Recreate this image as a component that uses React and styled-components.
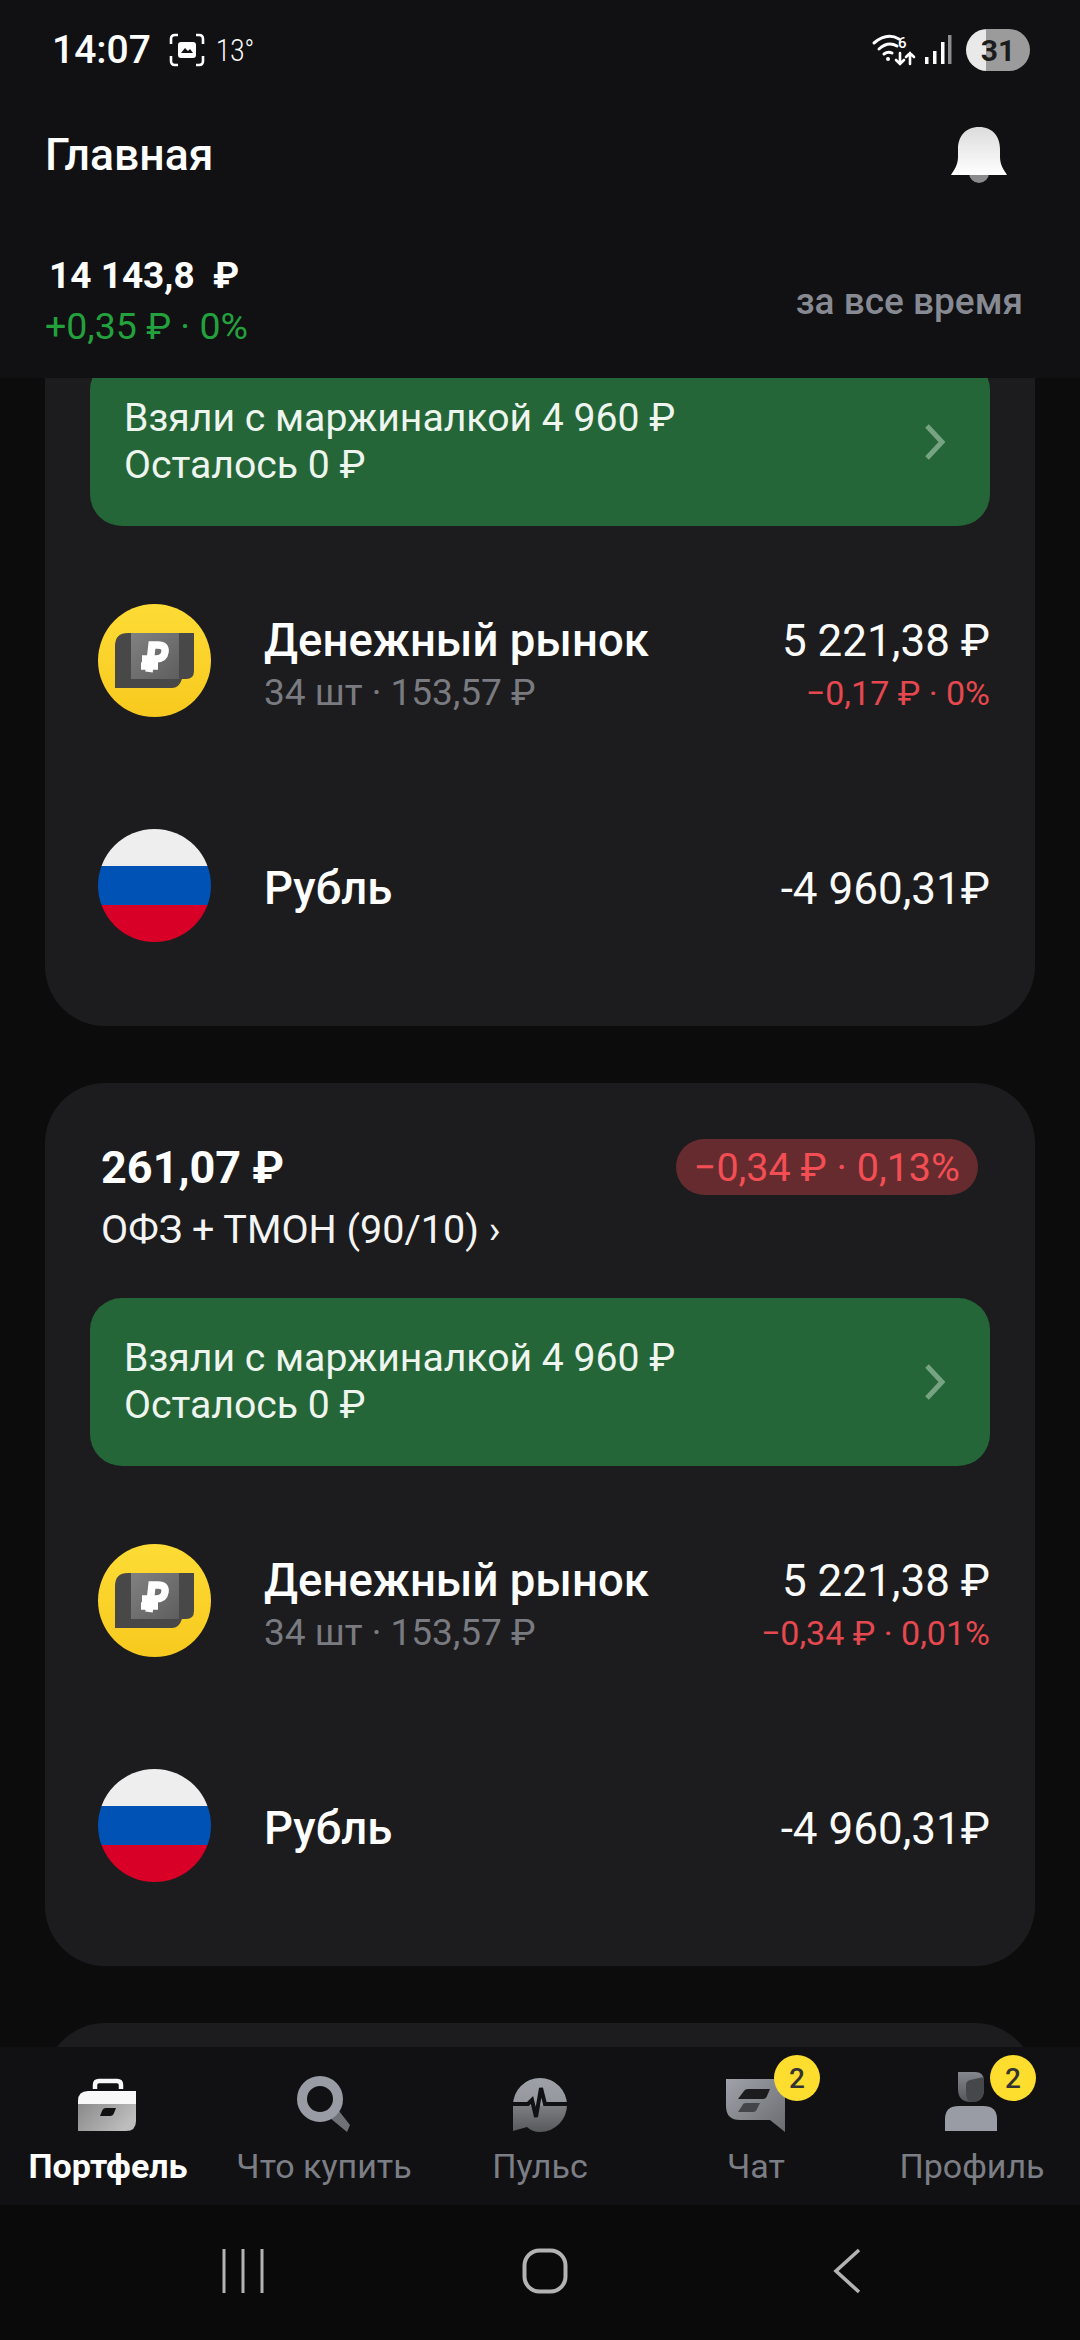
import React from "react";
import styled, { createGlobalStyle } from "styled-components";

const GlobalStyle = createGlobalStyle`
  html, body { margin: 0; padding: 0; background: #0c0c0d; }
  * { box-sizing: border-box; }
`;

const Page = styled.div`
  width: 1080px;
  height: 2340px;
  display: flex;
  flex-direction: column;
  overflow: hidden;
  background: #0c0c0d;
  color: #fff;
  font-family: Roboto, "Noto Sans", sans-serif;
`;

const Head = styled.header`
  height: 378px;
  flex: none;
  background: #111113;
`;

const StatusBar = styled.div`
  height: 100px;
  display: flex;
  align-items: center;
  padding: 0 50px 0 52px;
`;

const Clock = styled.span`
  font-size: 39px;
  font-weight: 500;
  margin-right: 18px;
`;

const Temp = styled.span`
  font-size: 32px;
  font-weight: 300;
  margin-left: 11px;
  transform: scaleX(0.8);
  transform-origin: left center;
`;

const StatusRight = styled.div`
  margin-left: auto;
  display: flex;
  align-items: center;
`;

const Battery = styled.div`
  width: 64px;
  height: 42px;
  border-radius: 21px;
  background: linear-gradient(90deg, #e9e9e9 0 20px, #9b9b9b 20px 100%);
  color: #1c1c1c;
  font-size: 30px;
  font-weight: 700;
  display: flex;
  align-items: center;
  justify-content: center;
`;

const TitleBar = styled.div`
  height: 110px;
  display: flex;
  align-items: center;
  justify-content: space-between;
  padding: 0 73px 0 45px;
`;

const Title = styled.h1`
  margin: 0;
  font-size: 44.5px;
  font-weight: 500;
`;

const Totals = styled.div`
  display: flex;
  align-items: center;
  justify-content: space-between;
  padding: 41px 57px 0 45px;
`;

const TotalValue = styled.div`
  font-size: 37px;
  font-weight: 700;
  line-height: 50px;
  padding-left: 4px;
  white-space: pre;
`;

const TotalDelta = styled.div`
  font-size: 37.5px;
  line-height: 50px;
  color: #23a13d;
`;

const Period = styled.div`
  font-size: 37px;
  font-weight: 500;
  color: #878a93;
`;

const List = styled.main`
  flex: 1;
  min-height: 0;
  overflow: hidden;
  padding: 0 45px;
  display: flex;
  flex-direction: column;
  gap: 57px;
`;

const Card = styled.section`
  flex: none;
  background: #1c1c1e;
  padding: 0 45px 28px;
  padding-top: ${(p) => (p.$cut ? "0" : "56px")};
  border-radius: ${(p) => (p.$cut ? "0 0 60px 60px" : "60px")};
`;

const NextCard = styled(Card)`
  height: 120px;
  padding: 0;
`;

const CardHead = styled.div`
  padding: 0 12px 0 11px;
  margin-bottom: 46px;
`;

const CardTop = styled.div`
  display: flex;
  align-items: center;
  justify-content: space-between;
  height: 56px;
`;

const CardSum = styled.div`
  font-size: 45px;
  font-weight: 700;
`;

const Pill = styled.div`
  height: 56px;
  padding: 0 18px;
  border-radius: 28px;
  background: #662b2e;
  color: #f44e55;
  font-size: 39.5px;
  display: flex;
  align-items: center;
`;

const CardName = styled.div`
  margin-top: 13px;
  font-size: 39.5px;
  line-height: 44px;
  color: #f4f4f4;
`;

const Banner = styled.div`
  height: 168px;
  margin-top: ${(p) => (p.$cut ? "-20px" : "0")};
  margin-bottom: 22px;
  padding: 0 44px 0 34px;
  border-radius: 32px;
  background: #256638;
  display: flex;
  align-items: center;
  justify-content: space-between;
`;

const BannerText = styled.div`
  font-size: 39.2px;
  line-height: 47px;
  color: #eef5ef;
`;

const Row = styled.div`
  height: 225px;
  display: flex;
  align-items: center;
  padding-left: 8px;
`;

const RowIcon = styled.svg`
  width: 113px;
  height: 113px;
  flex: none;
  margin-right: 53px;
`;

const RowBody = styled.div`
  flex: 1;
  min-width: 0;
  padding-top: ${(p) => (p.$single ? "6px" : "12px")};
`;

const RowEnd = styled.div`
  text-align: right;
  padding-top: ${(p) => (p.$single ? "6px" : "12px")};
`;

const RowName = styled.div`
  font-size: 45.5px;
  font-weight: 500;
  line-height: 52px;
`;

const RowSub = styled.div`
  font-size: 37px;
  line-height: 52px;
  color: #7a7b81;
`;

const RowSum = styled.div`
  font-size: 44px;
  line-height: 52px;
  color: #fafafa;
`;

const RowDelta = styled.div`
  font-size: 34px;
  line-height: 52px;
  color: #e5484f;
`;

const TabBar = styled.nav`
  height: 158px;
  flex: none;
  background: #111113;
  display: grid;
  grid-template-columns: repeat(5, 216px);
`;

const Tab = styled.div`
  position: relative;
  display: flex;
  flex-direction: column;
  align-items: center;
`;

const TabIcon = styled.div`
  height: 86px;
  display: flex;
  align-items: flex-end;
  justify-content: center;
`;

const TabLabel = styled.div`
  margin-top: 13px;
  font-size: 34px;
  line-height: 40px;
  font-weight: ${(p) => (p.$active ? 700 : 400)};
  color: ${(p) => (p.$active ? "#fff" : "#7c7e85")};
`;

const Badge = styled.div`
  position: absolute;
  top: 8px;
  left: ${(p) => p.$left}px;
  width: 46px;
  height: 46px;
  border-radius: 50%;
  background: #fddd2d;
  color: #333;
  font-size: 28px;
  font-weight: 500;
  display: flex;
  align-items: center;
  justify-content: center;
`;

const SystemBar = styled.div`
  height: 135px;
  flex: none;
  background: #0a0a0a;
  display: grid;
  grid-template-columns: repeat(3, 302px);
  justify-content: center;
  justify-items: center;
  align-items: center;
  padding: 0 0 4px 10px;
`;

const MoneyIcon = () => (
  <RowIcon viewBox="0 0 113 113">
    <defs>
      <linearGradient id="coin" x1="0" y1="0" x2="0" y2="1">
        <stop offset="0" stopColor="#fddc35" />
        <stop offset="1" stopColor="#f8c91e" />
      </linearGradient>
      <linearGradient id="note" x1="0" y1="0" x2="1" y2="1">
        <stop offset="0" stopColor="#818181" />
        <stop offset="1" stopColor="#5e5e5e" />
      </linearGradient>
    </defs>
    <circle cx="56.5" cy="56.5" r="56.5" fill="url(#coin)" />
    <path d="M30 29H96V67Q96 75 88 75H84Q81 84 74 84H17V42Q17 29 30 29Z" fill="#484848" />
    <path d="M33 29H81V75H33Z" fill="url(#note)" />
    <path d="M51 68L54 41H60Q68 41 67 48Q66 55 58 55H44M43 62H60" fill="none" stroke="#fff" strokeWidth="7.5" />
  </RowIcon>
);

const FlagIcon = () => (
  <RowIcon viewBox="0 0 113 113">
    <defs>
      <clipPath id="flagClip">
        <circle cx="56.5" cy="56.5" r="56.5" />
      </clipPath>
    </defs>
    <g clipPath="url(#flagClip)">
      <rect width="113" height="37" fill="#eeeeee" />
      <rect y="37" width="113" height="39" fill="#0052b4" />
      <rect y="76" width="113" height="37" fill="#d80027" />
    </g>
  </RowIcon>
);

const Chevron = () => (
  <svg width="22" height="38" viewBox="0 0 22 38">
    <path d="M3 3L18 19L3 35" fill="none" stroke="#76a382" strokeWidth="5" />
  </svg>
);

const BellIcon = () => (
  <svg width="56" height="56" viewBox="0 0 56 56">
    <defs>
      <linearGradient id="bell" x1="0" y1="0" x2="0" y2="1">
        <stop offset="0" stopColor="#dcdcdc" />
        <stop offset="1" stopColor="#ffffff" />
      </linearGradient>
    </defs>
    <circle cx="28" cy="46" r="10" fill="#8b8b8b" />
    <path d="M28 0C14 0 7 10 7 22V30C7 38 3 43 0 48H56C53 43 49 38 49 30V22C49 10 42 0 28 0Z" fill="url(#bell)" />
  </svg>
);

const ShotIcon = () => (
  <svg width="36" height="34" viewBox="0 0 36 34">
    <path d="M2 11V6Q2 2 6 2H9M27 2H30Q34 2 34 6V11M34 23V28Q34 32 30 32H27M9 32H6Q2 32 2 28V23" fill="none" stroke="#fff" strokeWidth="2.6" />
    <rect x="9" y="9" width="18" height="16" rx="3" fill="#fff" />
    <path d="M12 20L16 15L19 18L21 16L24 20Z" fill="#111113" />
  </svg>
);

const NetIcon = () => (
  <svg width="96" height="42" viewBox="20 10 96 42">
    <g fill="none" stroke="#fff" strokeWidth="3" strokeLinecap="round">
      <path d="M24 24Q37 13 49 20" />
      <path d="M29 30Q38 22 47 27" />
      <path d="M34 35Q38 32 42 34" />
      <path d="M50 34V45M46 41L50 45L54 41" strokeWidth="2.6" />
      <path d="M60 45V34M56 38L60 34L64 38" strokeWidth="2.6" />
    </g>
    <circle cx="38" cy="40" r="2" fill="#fff" />
    <text x="48" y="29" fontFamily="Roboto" fontWeight="500" fontSize="15" fill="#fff">6</text>
    <rect x="75" y="38" width="3.5" height="7" fill="#fff" />
    <rect x="83" y="32" width="3.5" height="13" fill="#fff" />
    <rect x="91" y="23" width="3.5" height="22" fill="#fff" />
    <rect x="98" y="16" width="3.5" height="29" fill="#8c8c8c" />
  </svg>
);

const CaseIcon = () => (
  <svg width="60" height="56" viewBox="0 0 60 56">
    <defs>
      <linearGradient id="caseFill" x1="0" y1="0" x2="1" y2="0.4">
        <stop offset="0" stopColor="#8a8a8a" />
        <stop offset="1" stopColor="#bdbdbd" />
      </linearGradient>
    </defs>
    <path d="M0 27V54H48Q58 54 58 44V27Z" fill="url(#caseFill)" />
    <path d="M0 27V24Q0 14 10 14H58V27Z" fill="#f8f8f8" />
    <path d="M17 12V8Q17 4 21 4H39Q43 4 43 8V12" fill="none" stroke="#f8f8f8" strokeWidth="4.5" />
    <path d="M24 34Q25 31 28 31H38L36 36Q35 39 32 39H22Z" fill="#111113" />
  </svg>
);

const SearchIcon = () => (
  <svg width="56" height="58" viewBox="0 0 56 58">
    <path d="M34 43L43 36L54 50L51 57Z" fill="#6f7177" />
    <circle cx="24" cy="24" r="18" fill="none" stroke="#9a9ca5" strokeWidth="10" />
  </svg>
);

const PulseIcon = () => (
  <svg width="56" height="56" viewBox="0 0 56 56">
    <defs>
      <linearGradient id="pulseFill" x1="0" y1="0" x2="0" y2="1">
        <stop offset="0" stopColor="#9fa1a9" />
        <stop offset="0.5" stopColor="#94969d" />
        <stop offset="0.52" stopColor="#7c7d81" />
        <stop offset="1" stopColor="#58595c" />
      </linearGradient>
    </defs>
    <path d="M1 28A27 27 0 1 1 28 55Q20 55 15 50L1 54Z" fill="url(#pulseFill)" />
    <path d="M1 27H16L20 23L24 40L29 11L33 27H55" fill="none" stroke="#111113" strokeWidth="4" />
  </svg>
);

const ChatIcon = () => (
  <svg width="60" height="54" viewBox="0 0 60 54">
    <defs>
      <linearGradient id="chatFill" x1="0" y1="0" x2="1" y2="1">
        <stop offset="0" stopColor="#a0a2aa" />
        <stop offset="1" stopColor="#696b70" />
      </linearGradient>
    </defs>
    <path d="M0 0H59V53L44 41H14Q0 41 0 27Z" fill="url(#chatFill)" />
    <path d="M18 12Q19 10 22 10H44L41 17Q40 20 37 20H12Z" fill="#1c1c1f" />
    <path d="M16 27Q17 24 20 24H34L31 30Q30 33 27 33H12Z" fill="#43454a" />
  </svg>
);

const ProfileIcon = () => (
  <svg width="54" height="62" viewBox="0 0 54 62">
    <defs>
      <linearGradient id="hair" x1="0" y1="0" x2="0" y2="1">
        <stop offset="0" stopColor="#85878e" />
        <stop offset="1" stopColor="#55565b" />
      </linearGradient>
    </defs>
    <path d="M13 1H30Q39 1 39 10V18Q39 31 26 31Q13 31 13 18Z" fill="url(#hair)" />
    <path d="M21 14Q21 10 25 9L39 6V18Q39 31 28 31Q21 31 21 22Z" fill="#46474b" />
    <path d="M0 60V48Q0 35 14 35H38Q52 35 52 48V60Z" fill="#9a9ca5" />
  </svg>
);

const MenuGlyph = () => (
  <svg width="42" height="44" viewBox="0 0 42 44">
    <path d="M2 0V44M21 0V44M40 0V44" stroke="#b3b3b3" strokeWidth="3" />
  </svg>
);

const HomeGlyph = () => (
  <svg width="46" height="46" viewBox="0 0 46 46">
    <rect x="2.5" y="2.5" width="41" height="41" rx="15" fill="none" stroke="#b3b3b3" strokeWidth="4" />
  </svg>
);

const BackGlyph = () => (
  <svg width="30" height="46" viewBox="0 0 30 46">
    <path d="M27 2L4 23L27 44" fill="none" stroke="#b3b3b3" strokeWidth="3.6" />
  </svg>
);

const tabs = [
  { label: "Портфель", icon: CaseIcon, active: true },
  { label: "Что купить", icon: SearchIcon },
  { label: "Пульс", icon: PulseIcon },
  { label: "Чат", icon: ChatIcon, badge: 126 },
  { label: "Профиль", icon: ProfileIcon, badge: 126 },
];

const Holdings = ({ cut, delta }) => (
  <>
    <Banner $cut={cut}>
      <BannerText>
        Взяли с маржиналкой 4 960 ₽
        <br />
        Осталось 0 ₽
      </BannerText>
      <Chevron />
    </Banner>
    <Row>
      <MoneyIcon />
      <RowBody>
        <RowName>Денежный рынок</RowName>
        <RowSub>34 шт · 153,57 ₽</RowSub>
      </RowBody>
      <RowEnd>
        <RowSum>5 221,38 ₽</RowSum>
        <RowDelta>{delta}</RowDelta>
      </RowEnd>
    </Row>
    <Row>
      <FlagIcon />
      <RowBody $single>
        <RowName>Рубль</RowName>
      </RowBody>
      <RowEnd $single>
        <RowSum>-4 960,31₽</RowSum>
      </RowEnd>
    </Row>
  </>
);

export default function App() {
  return (
    <Page>
      <GlobalStyle />
      <Head>
        <StatusBar>
          <Clock>14:07</Clock>
          <ShotIcon />
          <Temp>13°</Temp>
          <StatusRight>
            <NetIcon />
            <Battery>31</Battery>
          </StatusRight>
        </StatusBar>
        <TitleBar>
          <Title>Главная</Title>
          <BellIcon />
        </TitleBar>
        <Totals>
          <div>
            <TotalValue>14 143,8  ₽</TotalValue>
            <TotalDelta>+0,35 ₽ · 0%</TotalDelta>
          </div>
          <Period>за все время</Period>
        </Totals>
      </Head>

      <List>
        <Card $cut>
          <Holdings cut delta="−0,17 ₽ · 0%" />
        </Card>
        <Card>
          <CardHead>
            <CardTop>
              <CardSum>261,07 ₽</CardSum>
              <Pill>−0,34 ₽ · 0,13%</Pill>
            </CardTop>
            <CardName>ОФЗ + ТМОН (90/10) ›</CardName>
          </CardHead>
          <Holdings delta="−0,34 ₽ · 0,01%" />
        </Card>
        <NextCard />
      </List>

      <TabBar>
        {tabs.map((tab) => (
          <Tab key={tab.label}>
            <TabIcon>
              <tab.icon />
            </TabIcon>
            <TabLabel $active={tab.active}>{tab.label}</TabLabel>
            {tab.badge && <Badge $left={tab.badge}>2</Badge>}
          </Tab>
        ))}
      </TabBar>

      <SystemBar>
        <MenuGlyph />
        <HomeGlyph />
        <BackGlyph />
      </SystemBar>
    </Page>
  );
}
